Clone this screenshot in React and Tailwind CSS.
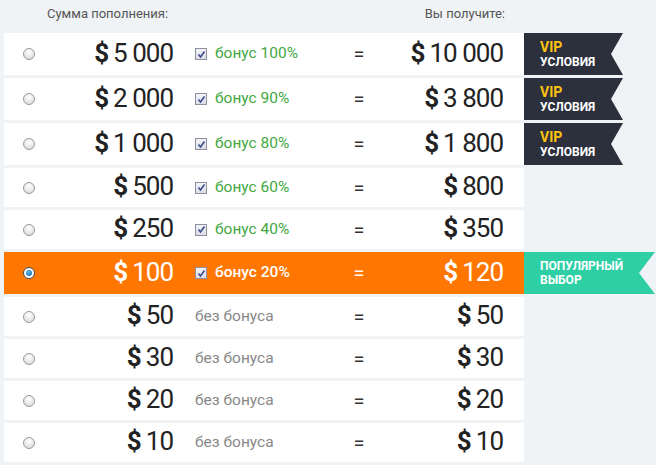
import React from 'react'

const rows = [
  { amount: '5 000', bonus: 'бонус 100%', get: '10 000', badge: 'vip', h: 'h-[42px]' },
  { amount: '2 000', bonus: 'бонус 90%', get: '3 800', badge: 'vip', h: 'h-[42px]' },
  { amount: '1 000', bonus: 'бонус 80%', get: '1 800', badge: 'vip', h: 'h-[42px]' },
  { amount: '500', bonus: 'бонус 60%', get: '800', h: 'h-[39px]' },
  { amount: '250', bonus: 'бонус 40%', get: '350', h: 'h-[39px]' },
  { amount: '100', bonus: 'бонус 20%', get: '120', badge: 'popular', active: true, h: 'h-[42px]' },
  { amount: '50', get: '50', h: 'h-[39px]' },
  { amount: '30', get: '30', h: 'h-[39px]' },
  { amount: '20', get: '20', h: 'h-[39px]' },
  { amount: '10', get: '10', h: 'h-[39px]' },
]

function Radio({ checked }) {
  if (checked) {
    return (
      <span className="w-[12px] h-[12px] rounded-full border border-[#3d4a55] bg-white flex items-center justify-center">
        <span className="w-[6px] h-[6px] rounded-full bg-[radial-gradient(circle_at_40%_35%,#5cb8f0,#0a5a9c)]" />
      </span>
    )
  }
  return (
    <span className="w-[12px] h-[12px] rounded-full border border-[#9a9a9a] bg-[radial-gradient(circle_at_50%_30%,#ffffff,#d6d6d6)]" />
  )
}

function Check() {
  return (
    <span className="w-[12px] h-[12px] border border-[#8f8f9d] bg-[linear-gradient(#f4f4f8,#dcdce6)] flex items-center justify-center">
      <svg width="9" height="9" viewBox="0 0 9 9">
        <path d="M1.5 4.5 L3.5 7 L7.5 1.5" stroke="#3b4a8c" strokeWidth="1.6" fill="none" />
      </svg>
    </span>
  )
}

function Money({ value, white }) {
  return (
    <span className={'text-[26px] leading-none tracking-[-1px] ' + (white ? 'text-white' : 'text-[#222]')}>
      <span className="font-bold mr-[5px]">$</span>
      {value}
    </span>
  )
}

function Badge({ type, h }) {
  if (type === 'vip') {
    return (
      <div className={'w-[99px] bg-[#2c303c] flex flex-col justify-center pl-[16px] [clip-path:polygon(0_0,100%_0,calc(100%-12px)_50%,100%_100%,0_100%)] ' + h}>
        <span className="text-[#ffc30f] font-bold text-[14px] leading-[15px]">VIP</span>
        <span className="text-white font-bold text-[12px] leading-[14px]">УСЛОВИЯ</span>
      </div>
    )
  }
  if (type === 'popular') {
    return (
      <div className={'w-[131px] bg-[#2ecfa5] flex flex-col justify-center pl-[16px] [clip-path:polygon(0_0,100%_0,calc(100%-16px)_50%,100%_100%,0_100%)] ' + h}>
        <span className="text-white font-bold text-[12px] leading-[14px]">ПОПУЛЯРНЫЙ</span>
        <span className="text-white font-bold text-[12px] leading-[14px]">ВЫБОР</span>
      </div>
    )
  }
  return null
}

export default function App() {
  return (
    <div className="w-[656px] h-[465px] bg-[#eff3f6] overflow-hidden font-['Roboto',sans-serif]">
      <div className="w-[520px] ml-[4px] h-[33px] flex items-start pt-[4px] text-[13px] text-[#555]">
        <span className="ml-[43px]">Сумма пополнения:</span>
        <span className="ml-auto mr-[19px]">Вы получите:</span>
      </div>
      <div className="flex flex-col gap-[3px]">
        {rows.map((r, i) => (
          <div key={i} className="flex">
            <div className={'w-[520px] ml-[4px] flex items-center ' + r.h + ' ' + (r.active ? 'bg-[#ff7700]' : 'bg-white')}>
              <span className="ml-[19px] flex">
                <Radio checked={r.active} />
              </span>
              <span className="w-[138px] text-right">
                <Money value={r.amount} white={r.active} />
              </span>
              <span className="w-[167px] pl-[22px] flex items-center gap-[8px] text-[15.5px]">
                {r.bonus ? (
                  <>
                    <Check />
                    <span className={r.active ? 'text-white font-medium' : 'text-[#43a83f]'}>{r.bonus}</span>
                  </>
                ) : (
                  <span className="text-[#888]">без бонуса</span>
                )}
              </span>
              <span className={'w-[38px] text-center text-[20px] ' + (r.active ? 'text-white' : 'text-[#333]')}>=</span>
              <span className="w-[125px] text-right">
                <Money value={r.get} white={r.active} />
              </span>
            </div>
            <Badge type={r.badge} h={r.h} />
          </div>
        ))}
      </div>
    </div>
  )
}
